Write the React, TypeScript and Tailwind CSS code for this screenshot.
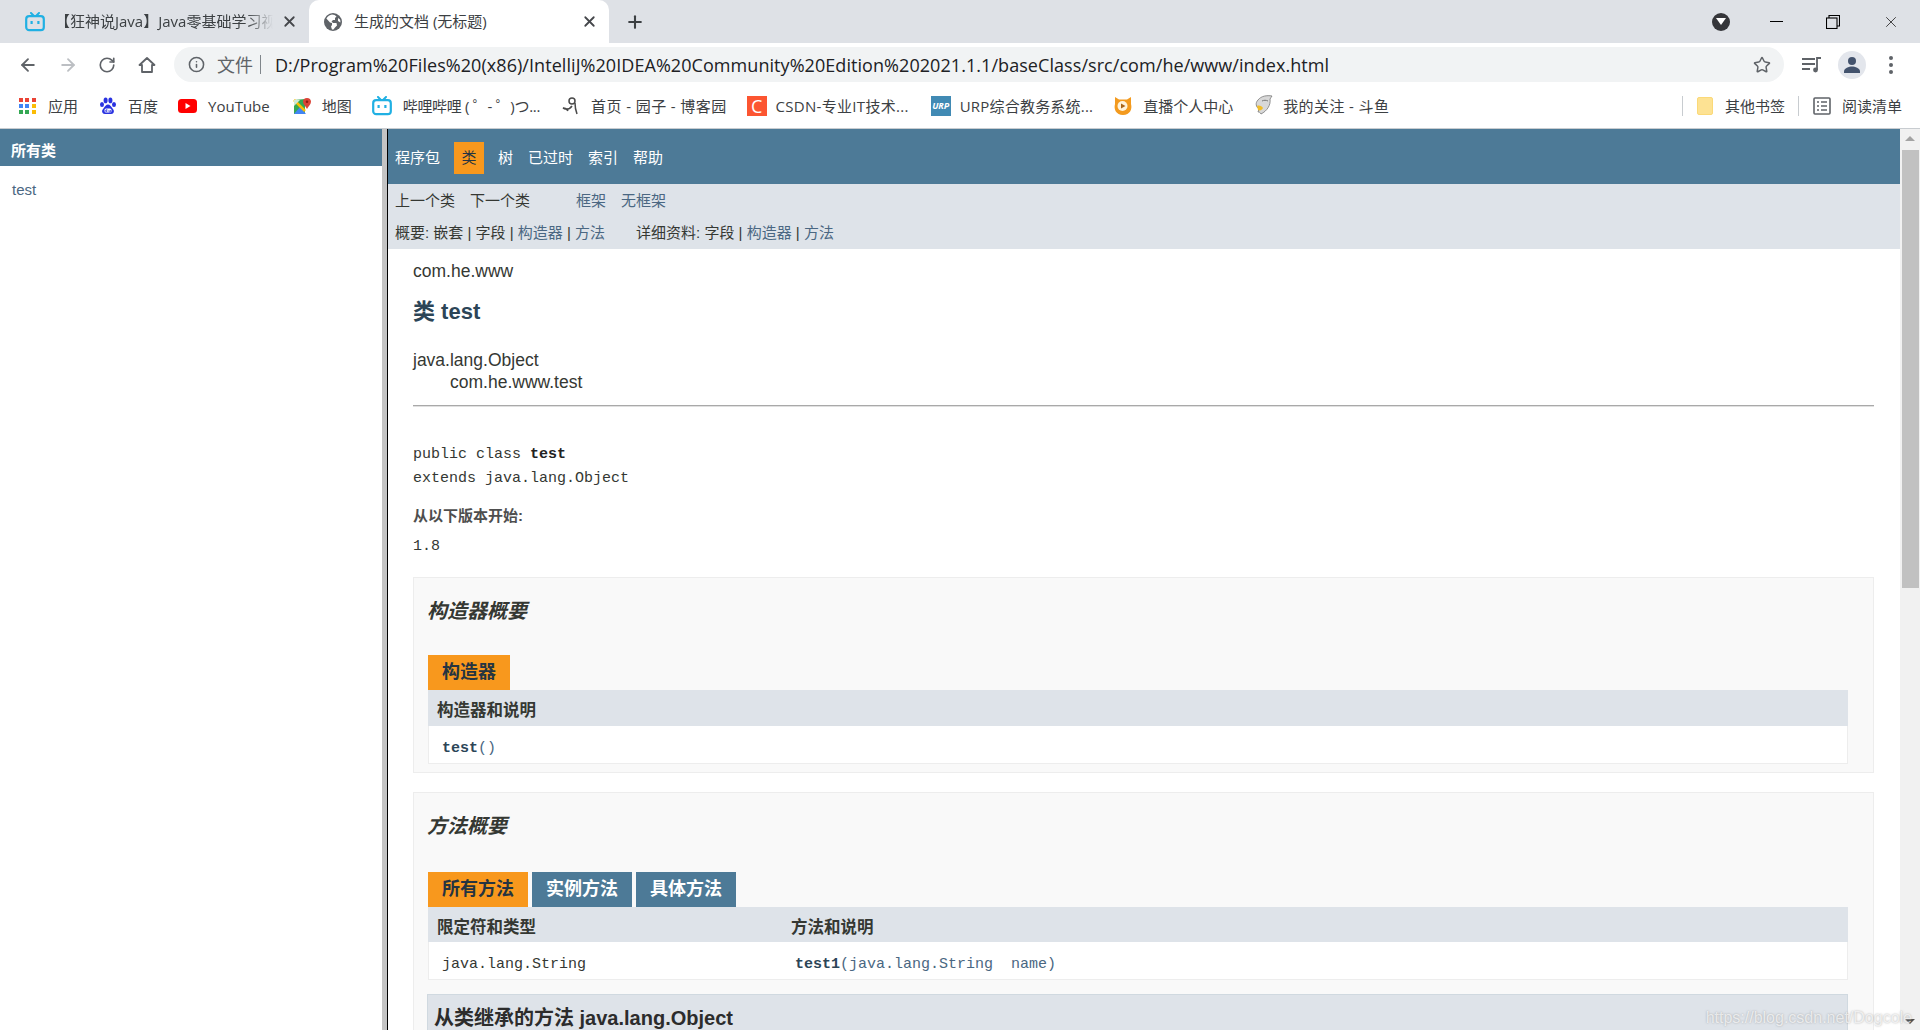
import { ArrowLeft, ArrowRight, RotateCw, Info, Star, Plus, X } from "lucide-react";

const uiFont = "font-['Open_Sans','Noto_Sans_CJK_SC',sans-serif]";
const docFont = "font-['Liberation_Sans','Noto_Sans_CJK_SC',sans-serif]";
const monoFont = "font-['Liberation_Mono','Noto_Sans_CJK_SC',monospace]";

function BiliIcon({ size = 20 }: { size?: number }) {
  return (
    <svg width={size} height={size} viewBox="0 0 20 20" fill="none">
      <path d="M6 1l3 3M14 1l-3 3" stroke="#20b0e3" strokeWidth="2" strokeLinecap="round" />
      <rect x="1.2" y="4.2" width="17.6" height="14" rx="3" stroke="#20b0e3" strokeWidth="2.2" />
      <rect x="5.5" y="9" width="2.2" height="3" fill="#20b0e3" />
      <rect x="12.3" y="9" width="2.2" height="3" fill="#20b0e3" />
    </svg>
  );
}

function AppsIcon() {
  const colors = ["#ea4335", "#ea4335", "#ea4335", "#4285f4", "#4285f4", "#fbbc05", "#34a853", "#34a853", "#fbbc05"];
  return (
    <div className="grid grid-cols-3 gap-[2px] w-[17px] h-[17px]">
      {colors.map((c, i) => (
        <span key={i} className="w-[4px] h-[4px]" style={{ backgroundColor: c }} />
      ))}
    </div>
  );
}

function GlobeIcon() {
  return (
    <svg width="18" height="18" viewBox="0 0 18 18">
      <circle cx="9" cy="9" r="9" fill="#5f6368" />
      <path d="M8 1.600C6 2 3.500 3.300 2.400 5.600L6 9.500l2 .5v2l-1 1.500 1 3c.5.100 1 .1 1.500 0L11 14.500l2-2-.5-2.500H9L7.500 8.500 9 7h2V5l1.500-1.500C11.500 2.500 9.800 1.700 8 1.600z" fill="#fff" />
      <path d="M14 5l2 1.500c.4 1 .5 2 .4 3L14 8z" fill="#fff" />
    </svg>
  );
}

function BaiduIcon() {
  return (
    <svg width="18" height="18" viewBox="0 0 18 18" fill="#2932e1">
      <ellipse cx="3" cy="7.500" rx="2" ry="2.600" />
      <ellipse cx="6.600" cy="3.400" rx="2" ry="2.800" />
      <ellipse cx="11.400" cy="3.400" rx="2" ry="2.800" />
      <ellipse cx="15" cy="7.500" rx="2" ry="2.600" />
      <path d="M9 7.500c-2 0-3 2-4.200 3.400C3.400 12.400 2.500 14 3.500 15.800 4.400 17.300 6.500 17 9 17s4.600.3 5.500-1.200c1-1.800.1-3.400-1.300-4.900C12 9.500 11 7.500 9 7.500z" />
      <rect x="5.500" y="11.500" width="7" height="4" rx="1.500" fill="#fff" />
      <path d="M7.800 12v3M7.800 14.400H6.600v-1.200h1.200M10 13v2h1.500v-2" stroke="#2932e1" strokeWidth=".7" fill="none" />
    </svg>
  );
}

function YouTubeIcon() {
  return (
    <svg width="19" height="14" viewBox="0 0 19 14">
      <rect width="19" height="14" rx="3.500" fill="#ff0000" />
      <path d="M7.500 4l5 3-5 3z" fill="#fff" />
    </svg>
  );
}

function MapsIcon() {
  return (
    <svg width="19" height="19" viewBox="0 0 19 19">
      <path d="M1 3l11-1v15H1z" fill="#34a853" />
      <path d="M1 17l6-7 6 7z" fill="#4285f4" />
      <path d="M1 3l11 11" stroke="#fbbc05" strokeWidth="2.500" />
      <path d="M1 3h6L1 9z" fill="#cfe8d4" />
      <path d="M14 1c2.500 0 4 1.700 4 3.700C18 7.500 15 9.500 14 12c-1-2.500-4-4.500-4-7.300C10 2.700 11.500 1 14 1z" fill="#db4437" />
      <circle cx="14" cy="4.700" r="1.300" fill="#8f1c12" />
    </svg>
  );
}

function BlogIcon() {
  return (
    <svg width="18" height="20" viewBox="0 0 18 20" fill="none" stroke="#4a4a4a" strokeWidth="1.500">
      <circle cx="11" cy="5" r="3" />
      <path d="M14 7c0 4 .5 7 2 11M11 10c-2 3-5 4-9 2 2 0 4 1 5 3" />
    </svg>
  );
}

function CatIcon() {
  return (
    <svg width="20" height="20" viewBox="0 0 20 20">
      <path d="M2 1l4 2.500h8L18 1v7c1.500 5-1 11-8 11S.5 13 2 8z" fill="#f39a1e" />
      <circle cx="9.500" cy="10" r="5" fill="#fff3dc" />
      <path d="M8 7.500l4.500 2.500L8 12.500z" fill="#a8641a" />
    </svg>
  );
}

function DouyuIcon() {
  return (
    <svg width="20" height="22" viewBox="0 0 20 22">
      <path d="M5 5c3-4 9-5 14-4-1 1-1 2-2 3 1 6-3 12-9 15-1-2-2-2-3-2l1-3C3 12 2 8 5 5z" fill="#d8d8d8" stroke="#777" strokeWidth=".8" />
      <path d="M4 11c2-1 5 0 6 2-1 2-3 3-5 2z" fill="#f1bd29" />
      <path d="M9 6c2-1 4-1 6 0" stroke="#777" strokeWidth="1" fill="none" />
    </svg>
  );
}

function Bookmark({ icon, label, className, textClass }: { icon: React.ReactNode; label: string; className: string; textClass?: string }) {
  return (
    <div className={`flex items-center shrink-0 ${className}`}>
      {icon}
      <span className={`text-[15px] text-[#3c4043] whitespace-nowrap ${textClass ?? ""}`}>{label}</span>
    </div>
  );
}

function BrowserChrome() {
  return (
    <div className={uiFont}>
      {/* tab strip */}
      <div className="h-[43px] bg-[#dee1e6] flex items-end relative">
        <div className="w-[309px] h-[43px] pl-[25px] pr-[11px] flex items-center shrink-0">
          <BiliIcon />
          <span className="ml-[10px] w-[218px] overflow-hidden whitespace-nowrap text-[15px] text-[#3c4043] [mask-image:linear-gradient(to_right,black_88%,transparent)]">【狂神说Java】Java零基础学习视频通俗易懂</span>
          <X className="ml-auto w-[17px] h-[17px] text-[#45474b]" strokeWidth={2.500} />
        </div>
        <div className="w-[300px] h-[43px] bg-white rounded-t-[10px] pl-[15px] pr-[11px] flex items-center shrink-0">
          <GlobeIcon />
          <span className="ml-[12px] text-[15px] text-[#3c4043]">生成的文档 (无标题)</span>
          <X className="ml-auto w-[17px] h-[17px] text-[#45474b]" strokeWidth={2.500} />
        </div>
        <div className="h-[43px] flex items-center ml-[16px]">
          <Plus className="w-[20px] h-[20px] text-[#3c4043]" strokeWidth={2.500} />
        </div>
        <div className="ml-auto h-[43px] flex items-center">
          <div className="w-[18px] h-[18px] rounded-full bg-[#35363a] flex items-center justify-center">
            <div className="w-0 h-0 border-x-[5px] border-x-transparent border-t-[7px] border-t-white" />
          </div>
          <div className="ml-[40px] w-[13px] h-px bg-black" />
          <svg className="ml-[43px]" width="14" height="14" viewBox="0 0 14 14" fill="none" stroke="#000" strokeWidth="1.100">
            <rect x="0.500" y="3" width="10.500" height="10.500" />
            <path d="M3 3V.5h10.500V11H11" />
          </svg>
          <X className="ml-[42px] mr-[20px] w-[18px] h-[18px] text-[#333]" strokeWidth={1.200} />
        </div>
      </div>

      {/* toolbar */}
      <div className="h-[43px] bg-white flex items-center pl-[18px]">
        <ArrowLeft className="w-[20px] h-[20px] text-[#5f6368]" strokeWidth={2.200} />
        <ArrowRight className="ml-[20px] w-[20px] h-[20px] text-[#bcbfc3]" strokeWidth={2.200} />
        <RotateCw className="ml-[20px] w-[18px] h-[18px] text-[#5f6368]" strokeWidth={2.200} />
        <svg className="ml-[22px]" width="18" height="18" viewBox="0 0 18 18" fill="none" stroke="#5f6368" strokeWidth="1.800" strokeLinejoin="round">
          <path d="M1.500 9L9 2l7.500 7H14v7H4V9z" />
        </svg>
        <div className="ml-[18px] w-[1610px] h-[35px] rounded-full bg-[#f1f3f4] flex items-center pl-[14px] pr-[13px]">
          <Info className="w-[17px] h-[17px] text-[#5f6368]" strokeWidth={2.200} />
          <span className="ml-[12px] text-[18px] text-[#5f6368] leading-none">文件</span>
          <span className="ml-[7px] w-px h-[19px] bg-[#80868b]" />
          <span className="ml-[14px] pt-[2px] text-[18px] text-[#202124] whitespace-nowrap tracking-[0.06px]">D:/Program%20Files%20(x86)/IntelliJ%20IDEA%20Community%20Edition%202021.1.1/baseClass/src/com/he/www/index.html</span>
          <Star className="ml-auto w-[18px] h-[18px] text-[#5f6368]" strokeWidth={2} />
        </div>
        <svg className="ml-[18px]" width="20" height="16" viewBox="0 0 20 16" fill="none" stroke="#5f6368" strokeWidth="1.800">
          <path d="M0 2h13M0 7h13M0 12h8" />
          <path d="M15 13V1h4" />
          <circle cx="13.500" cy="13" r="2.400" fill="#5f6368" stroke="none" />
        </svg>
        <div className="ml-[16px] w-[28px] h-[28px] rounded-full bg-[#e3e6ec] flex items-center justify-center">
          <svg width="18" height="18" viewBox="0 0 18 18" fill="#43536d">
            <circle cx="9" cy="5" r="4" />
            <path d="M1 17v-1.500C1 12 6 10.500 9 10.500s8 1.500 8 5V17z" />
          </svg>
        </div>
        <div className="ml-[23px] flex flex-col gap-[3px]">
          <span className="w-[4px] h-[4px] rounded-full bg-[#5f6368]" />
          <span className="w-[4px] h-[4px] rounded-full bg-[#5f6368]" />
          <span className="w-[4px] h-[4px] rounded-full bg-[#5f6368]" />
        </div>
      </div>

      {/* bookmarks */}
      <div className="h-[43px] pb-[2px] bg-white border-b border-[#c8ccd0] flex items-center pl-[19px]">
        <Bookmark icon={<AppsIcon />} label="应用" className="gap-[12px]" />
        <Bookmark icon={<BaiduIcon />} label="百度" className="ml-[21px] gap-[11px]" />
        <Bookmark icon={<YouTubeIcon />} label="YouTube" className="ml-[20px] gap-[11px]" />
        <Bookmark icon={<MapsIcon />} label="地图" className="ml-[23px] gap-[10px]" />
        <Bookmark icon={<BiliIcon />} label="哔哩哔哩 ( ゜- ゜)つ..." className="ml-[20px] gap-[11px]" textClass="tracking-[-0.3px]" />
        <Bookmark icon={<BlogIcon />} label="首页 - 园子 - 博客园" className="ml-[21px] gap-[12px]" textClass="tracking-[0.4px]" />
        <Bookmark
          icon={<span className="w-[20px] h-[20px] bg-[#fc5531] text-white text-[18px] leading-[20px] text-center">C</span>}
          label="CSDN-专业IT技术..."
          className="ml-[20px] gap-[9px]"
          textClass="tracking-[0.3px]"
        />
        <Bookmark
          icon={<span className="w-[20px] h-[20px] bg-[#418ab4] text-white text-[9px] leading-[20px] italic font-bold text-center">URP</span>}
          label="URP综合教务系统..."
          className="ml-[22px] gap-[9px]"
          textClass="tracking-[0.2px]"
        />
        <Bookmark icon={<CatIcon />} label="直播个人中心" className="ml-[20px] gap-[10px]" />
        <Bookmark icon={<DouyuIcon />} label="我的关注 - 斗鱼" className="ml-[20px] gap-[10px]" textClass="tracking-[0.4px]" />
        <div className="ml-auto flex items-center pr-[18px]">
          <span className="w-px h-[20px] bg-[#c8ccd0]" />
          <div className="ml-[14px] w-[16px] h-[18px] rounded-[2px] bg-[#fde293] border border-[#fbd978]" />
          <span className="ml-[12px] text-[15px] text-[#3c4043]">其他书签</span>
          <span className="ml-[13px] w-px h-[20px] bg-[#c8ccd0]" />
          <svg className="ml-[14px]" width="18" height="18" viewBox="0 0 18 18" fill="none" stroke="#5f6368" strokeWidth="1.600">
            <rect x="1" y="1" width="16" height="16" rx="1" />
            <path d="M4 5h2M8 5h6M4 9h2M8 9h6M4 13h2M8 13h6" />
          </svg>
          <span className="ml-[11px] text-[15px] text-[#3c4043]">阅读清单</span>
        </div>
      </div>
    </div>
  );
}

function LeftFrame() {
  return (
    <div className={`w-[382px] shrink-0 bg-white ${docFont}`}>
      <div className="h-[37px] bg-[#4d7a97] pl-[11px] pt-[7px] flex items-center text-[15px] font-bold text-white">所有类</div>
      <div className="pl-[12px] pt-[14px] text-[15px] leading-[20px] text-[#4a6782]">test</div>
    </div>
  );
}

function NavBar() {
  const items = ["程序包", "类", "树", "已过时", "索引", "帮助"];
  return (
    <>
      <div className="h-[55px] bg-[#4d7a97] flex items-end pb-[10px] pl-[7px] text-[15px] text-white">
        {items.map((item) =>
          item === "类" ? (
            <span key={item} className="w-[30px] h-[32px] bg-[#f8981d] text-[#253441] flex items-center justify-center -ml-px mr-[14px]">{item}</span>
          ) : (
            <span key={item} className="h-[32px] flex items-center mr-[15px]">{item}</span>
          )
        )}
      </div>
      <div className="h-[65px] bg-[#dee3e9] pl-[7px] text-[15px] text-[#353833]">
        <div className="h-[32px] pt-[3px] flex items-center">
          <span>上一个类</span>
          <span className="ml-[15px]">下一个类</span>
          <span className="ml-[46px] text-[#4a6782]">框架</span>
          <span className="ml-[15px] text-[#4a6782]">无框架</span>
        </div>
        <div className="h-[33px] pt-[2px] flex items-center whitespace-pre">
          <span>概要: 嵌套 | 字段 | </span>
          <span className="text-[#4a6782]">构造器</span>
          <span> | </span>
          <span className="text-[#4a6782]">方法</span>
          <span className="ml-[31px]">详细资料: 字段 | </span>
          <span className="text-[#4a6782]">构造器</span>
          <span> | </span>
          <span className="text-[#4a6782]">方法</span>
        </div>
      </div>
    </>
  );
}

function SummaryRow({ children }: { children: React.ReactNode }) {
  return <div className="bg-white border-x border-b border-[#ededed] h-[38px] pt-[9px] flex items-center">{children}</div>;
}

function Tab({ label, active }: { label: string; active?: boolean }) {
  return (
    <div className={`h-[35px] px-[14px] flex items-center text-[18px] font-bold ${active ? "bg-[#f8981d] text-[#253441]" : "bg-[#4d7a97] text-white"}`}>
      {label}
    </div>
  );
}

function Content() {
  return (
    <div className={`pl-[25px] pr-[26px] text-[#353833] ${docFont}`}>
      <div className="pt-[11px] text-[17.500px] leading-[22px] text-[#353833]">com.he.www</div>
      <h2 className="mt-[16px] text-[22px] leading-[28px] font-bold text-[#2c4557]">类 test</h2>
      <div className="mt-[23px] text-[17.500px] leading-[22px]">java.lang.Object</div>
      <div className="pl-[37px] text-[17.500px] leading-[22px]">com.he.www.test</div>
      <div className="mt-[12px] h-[2px] bg-[#a9a9a9] border-b border-[#e0e0e0]" />
      <div className={`mt-[36px] text-[15px] leading-[24px] ${monoFont}`}>
        public class <b className="text-[#222]">test</b>
        <br />
        extends java.lang.Object
      </div>
      <div className="mt-[13px] text-[15px] leading-[24px] font-bold text-[#4e4e4e]">从以下版本开始:</div>
      <div className={`mt-[7px] text-[15px] leading-[24px] ${monoFont}`}>1.8</div>

      {/* constructor summary */}
      <div className="mt-[18px] h-[196px] bg-[#f9f9f9] border border-[#ededed] pl-[14px] pr-[25px]">
        <div className="pt-[20px] -ml-px text-[20px] leading-[26px] font-bold italic text-[#353833]">构造器概要</div>
        <div className="mt-[31px] flex"><Tab label="构造器" active /></div>
        <div className="h-[36px] pt-[4px] bg-[#dee3e9] pl-[9px] flex items-center text-[16.500px] font-bold text-[#353833]">构造器和说明</div>
        <SummaryRow>
          <span className={`pl-[13px] text-[15px] text-[#4a6782] ${monoFont}`}><b className="text-[#2c4557]">test</b>()</span>
        </SummaryRow>
      </div>

      {/* method summary */}
      <div className="mt-[19px] bg-[#f9f9f9] border border-[#ededed] pl-[14px] pr-[25px] pb-[40px]">
        <div className="pt-[20px] -ml-px text-[20px] leading-[26px] font-bold italic text-[#353833]">方法概要</div>
        <div className="mt-[33px] flex gap-[4px]">
          <Tab label="所有方法" active />
          <Tab label="实例方法" />
          <Tab label="具体方法" />
        </div>
        <div className="h-[35px] pt-[5px] bg-[#dee3e9] flex items-center text-[16.500px] font-bold text-[#353833]">
          <span className="pl-[9px] w-[363px]">限定符和类型</span>
          <span>方法和说明</span>
        </div>
        <SummaryRow>
          <span className={`pl-[13px] w-[366px] text-[15px] ${monoFont}`}>java.lang.String</span>
          <span className={`text-[15px] text-[#4a6782] whitespace-pre ${monoFont}`}><b className="font-bold text-[#2c4557]">test1</b>(java.lang.String  name)</span>
        </SummaryRow>
        <div className="mt-[14px] -ml-px h-[50px] bg-[#dee3e9] border border-[#d0d9e0] pl-[6px] pt-[9px] text-[20px] leading-[28px] font-bold text-[#2c2c2c]">从类继承的方法 java.lang.Object</div>
      </div>
    </div>
  );
}

function Scrollbar() {
  return (
    <div className="w-[20px] shrink-0 bg-[#f1f1f1] flex flex-col items-center relative">
      <div className="mt-[7px] w-0 h-0 border-x-[5px] border-x-transparent border-b-[5px] border-b-[#a3a3a3]" />
      <div className="mt-[9px] w-[17px] h-[438px] bg-[#c1c1c1]" />
      <div className="absolute bottom-[6px] w-0 h-0 border-x-[5px] border-x-transparent border-t-[5px] border-t-[#505050]" />
    </div>
  );
}

export default function App() {
  return (
    <div className="w-[1920px] h-[1030px] overflow-hidden bg-white relative flex flex-col">
      <BrowserChrome />
      <div className="flex flex-1 min-h-0">
        <LeftFrame />
        <div className="w-[5px] shrink-0 bg-[#c4c4c4]" />
        <div className="w-px shrink-0 bg-black" />
        <div className="flex-1 min-w-0 overflow-hidden">
          <div className={docFont}><NavBar /></div>
          <Content />
        </div>
        <Scrollbar />
      </div>
      <div className="absolute right-[8px] bottom-[1px] text-[16px] leading-[22px] text-white/70 [text-shadow:0_0_2px_rgba(120,120,120,0.6)] font-['Liberation_Sans',sans-serif]">https://blog.csdn.net/Dogcole</div>
    </div>
  );
}
